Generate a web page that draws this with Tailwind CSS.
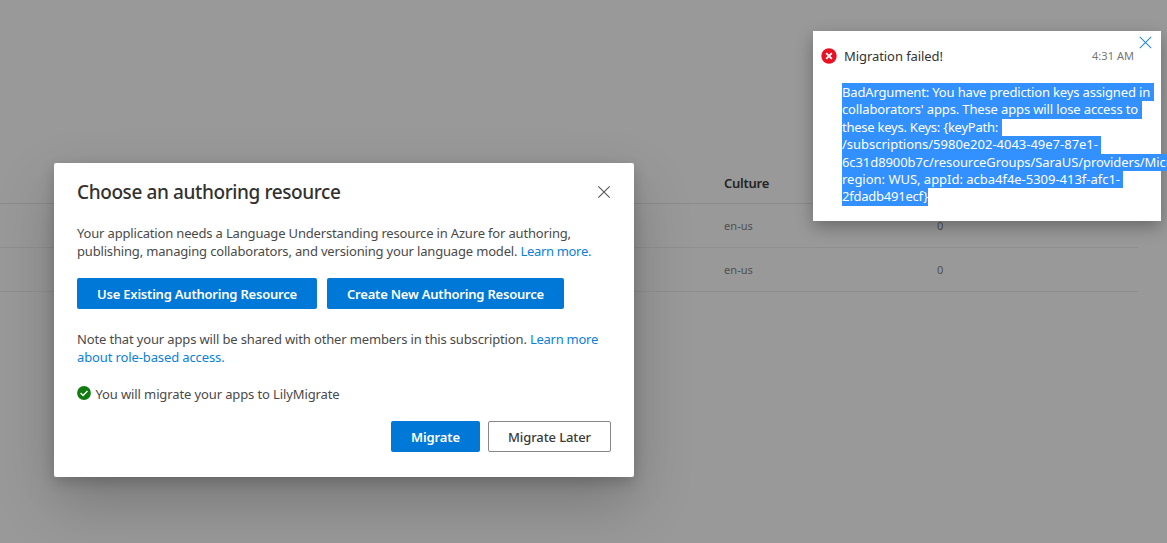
<!DOCTYPE html>
<html lang="en">
<head>
<meta charset="utf-8">
<title>Choose an authoring resource</title>
<script src="https://cdn.jsdelivr.net/npm/@tailwindcss/browser@4"></script>
</head>
<body class="relative h-[543px] w-[1167px] overflow-hidden bg-[#999999] font-['Noto_Sans','Open_Sans',sans-serif] text-[13px] text-[#4a4a4a]">

<!-- App list behind the overlay -->
<main class="w-[1138px] pt-[162px] text-[11px] text-[#505050]">
  <div class="flex h-[42px] items-center border-b border-[#8b8b8b] pl-[724px] pt-[2px] text-[13px] font-semibold tracking-[-0.26px] text-[#242424]">Culture</div>
  <div class="flex h-[44px] items-center border-b border-[#8f8f8f] pl-[724px] pt-[2px]"><span class="w-[213px] tracking-[0.07px]">en-us</span><span>0</span></div>
  <div class="flex h-[44px] items-center border-b border-[#8f8f8f] pl-[724px] pt-[2px]"><span class="w-[213px] tracking-[0.07px]">en-us</span><span>0</span></div>
</main>

<!-- Dialog -->
<section class="absolute left-[54px] top-[163px] flex h-[314px] w-[580px] flex-col rounded-[2px] bg-white pl-[23px] pr-[23px] pt-[15px] leading-[18px] whitespace-nowrap shadow-[0_25px_58px_rgba(0,0,0,0.22),0_5px_14px_rgba(0,0,0,0.18)]">
  <header class="flex h-[27px] items-center justify-between">
    <h1 class="text-[19px] font-medium tracking-[-0.396px] text-[#323130]">Choose an authoring resource</h1>
    <svg class="size-[14px]" viewBox="0 0 14 14" fill="none" stroke="#555" stroke-width="1.1"><path d="M1.3 1.3 12.7 12.7M12.7 1.3 1.3 12.7"/></svg>
  </header>
  <p class="mt-[19px]"><span class="tracking-[-0.17px]">Your application needs a Language Understanding resource in Azure for authoring,</span><br><span class="tracking-[-0.173px]">publishing, managing collaborators, and versioning your language model. </span><a class="tracking-[-0.33px] text-[#0b80dc]">Learn more.</a></p>
  <div class="mt-[18px] flex gap-[10px] font-semibold text-white">
    <button class="h-[31px] w-[240px] rounded-[2px] bg-[#0078d7] tracking-[-0.21px]">Use Existing Authoring Resource</button>
    <button class="h-[31px] w-[237px] rounded-[2px] bg-[#0078d7] tracking-[-0.205px]">Create New Authoring Resource</button>
  </div>
  <p class="mt-[21px]"><span class="tracking-[-0.147px]">Note that your apps will be shared with other members in this subscription. </span><a class="text-[#0b80dc]"><span class="tracking-[-0.27px]">Learn more</span><br><span class="tracking-[-0.12px]">about role-based access.</span></a></p>
  <div class="mt-[19px] flex items-center gap-[4.5px]">
    <svg class="-mt-[2px] size-[14px]" viewBox="0 0 14 14"><circle cx="7" cy="7" r="6.9" fill="#107c10"/><path d="M3.6 7.1 6 9.4 10.5 4.9" fill="none" stroke="#fff" stroke-width="1.4"/></svg>
    <span class="tracking-[-0.117px]">You will migrate your apps to LilyMigrate</span>
  </div>
  <div class="mt-[18px] flex justify-end gap-[8px]">
    <button class="h-[31px] w-[89px] rounded-[2px] bg-[#0078d7] font-semibold tracking-[-0.11px] text-white">Migrate</button>
    <button class="h-[31px] w-[123px] rounded-[2px] border border-[#8a8886] font-medium tracking-[-0.1px] text-[#3b3a39]">Migrate Later</button>
  </div>
</section>

<!-- Failure notification -->
<aside class="absolute left-[813px] top-[31px] h-[190px] w-[348px] bg-white whitespace-nowrap shadow-[0_6px_16px_rgba(0,0,0,0.3)]">
  <div class="flex items-center pl-[8px] pt-[16px] leading-[18px] text-[#333]">
    <svg class="size-[16px]" viewBox="0 0 16 16"><circle cx="8" cy="8" r="7.7" fill="#e81123"/><path d="M5.2 5.2 10.8 10.8M10.8 5.2 5.2 10.8" stroke="#fff" stroke-width="1.9"/></svg>
    <span class="ml-[7px] w-[248px] tracking-[-0.07px]">Migration failed!</span>
    <span class="text-[11px] tracking-[0.04px] text-[#767676]">4:31 AM</span>
    <svg class="absolute right-[9px] top-[5px] size-[13px]" viewBox="0 0 13 13" fill="none" stroke="#2a8dd8" stroke-width="1.1"><path d="M.8.8 12.2 12.2M12.2.8.8 12.2"/></svg>
  </div>
  <!-- Selected message text -->
  <div class="ml-[29px] mt-[18px] flex flex-col items-start leading-[17.4px] text-white *:bg-[#3390ff] *:pr-[3.5px]">
    <span class="pt-px tracking-[-0.16px]">BadArgument: You have prediction keys assigned in</span>
    <span class="tracking-[-0.136px]">collaborators' apps. These apps will lose access to</span>
    <span class="tracking-[-0.242px]">these keys. Keys: {keyPath:</span>
    <span class="tracking-[-0.012px]">/subscriptions/5980e202-4043-49e7-87e1-</span>
    <span class="tracking-[-0.083px]">6c31d8900b7c/resourceGroups/SaraUS/providers/Micr</span>
    <span class="tracking-[-0.021px]">region: WUS, appId: acba4f4e-5309-413f-afc1-</span>
    <span class="pr-0! tracking-[-0.231px]">2fdadb491ecf}</span>
  </div>
</aside>
</body>
</html>
